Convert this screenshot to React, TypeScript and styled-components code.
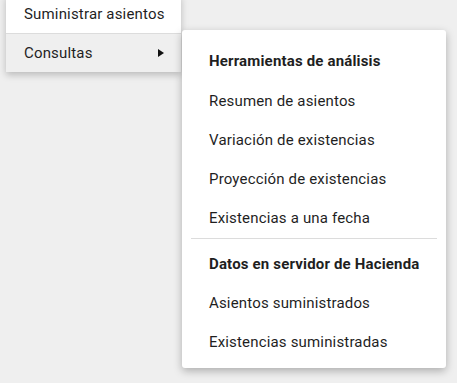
import React from "react";
import styled, { createGlobalStyle } from "styled-components";

const Global = createGlobalStyle`
  html, body {
    margin: 0;
    padding: 0;
    background: #efefef;
    font-family: Roboto, "Noto Sans", Arial, sans-serif;
    color: #1f1f1f;
  }
  #root { position: relative; width: 457px; height: 383px; overflow: hidden; }
`;

const Stage = styled.div`
  position: relative;
  width: 457px;
  height: 383px;
`;

const MainMenu = styled.ul`
  position: absolute;
  left: 6px;
  top: -5px;
  width: 175px;
  margin: 0;
  padding: 0;
  list-style: none;
  background: #fff;
  box-shadow: 0 3px 7px rgba(0, 0, 0, 0.22);
`;

const MainItem = styled.li<{ $active?: boolean; $divided?: boolean }>`
  display: flex;
  align-items: center;
  justify-content: space-between;
  height: 38px;
  padding: 0 17px 0 18px;
  font-size: 15px;
  letter-spacing: 0.17px;
  white-space: nowrap;
  background: ${(p) => (p.$active ? "#efefef" : "#fff")};
  border-bottom: ${(p) => (p.$divided ? "1px solid #dcdcdc" : "none")};
`;

const Arrow = styled.span`
  flex: none;
  width: 0;
  height: 0;
  border-left: 6px solid #111;
  border-top: 4px solid transparent;
  border-bottom: 4px solid transparent;
`;

const SubMenu = styled.ul`
  position: absolute;
  left: 182px;
  top: 30px;
  width: 264px;
  margin: 0;
  padding: 10px 0 7px;
  list-style: none;
  background: #fff;
  border-radius: 3px;
  box-shadow: 0 3px 9px rgba(0, 0, 0, 0.28);
`;

const SubItem = styled.li<{ $header?: boolean; $first?: boolean }>`
  display: flex;
  align-items: center;
  height: ${(p) => (p.$first ? "41px" : "39px")};
  padding: 0 27px;
  font-size: 15px;
  letter-spacing: 0.17px;
  font-weight: ${(p) => (p.$header ? 700 : 400)};
  white-space: nowrap;
`;

const Divider = styled.li`
  height: 1px;
  margin: 1px 9px 5px;
  background: #dcdcdc;
`;

export default function App() {
  return (
    <Stage>
      <Global />
      <MainMenu>
        <MainItem $divided>Suministrar asientos</MainItem>
        <MainItem $active>
          Consultas
          <Arrow />
        </MainItem>
      </MainMenu>
      <SubMenu>
        <SubItem $header $first>Herramientas de análisis</SubItem>
        <SubItem>Resumen de asientos</SubItem>
        <SubItem>Variación de existencias</SubItem>
        <SubItem>Proyección de existencias</SubItem>
        <SubItem>Existencias a una fecha</SubItem>
        <Divider />
        <SubItem $header>Datos en servidor de Hacienda</SubItem>
        <SubItem>Asientos suministrados</SubItem>
        <SubItem>Existencias suministradas</SubItem>
      </SubMenu>
    </Stage>
  );
}
